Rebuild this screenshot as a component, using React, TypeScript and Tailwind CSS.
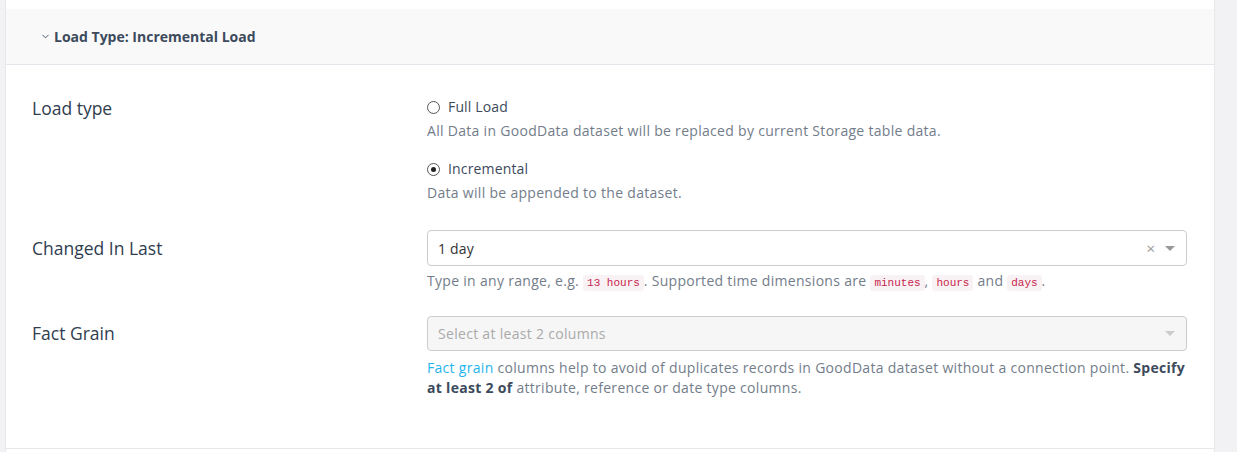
import { ChevronDown } from 'lucide-react'

const font = { fontFamily: '"Open Sans", "Noto Sans", sans-serif' }

function Code({ children }: { children: React.ReactNode }) {
  return (
    <code className="rounded-[3px] bg-[#f9f2f4] px-[4px] py-[2px] font-['Liberation_Mono',monospace] text-[11px] tracking-normal text-[#c7254e]">
      {children}
    </code>
  )
}

function Radio({ checked, label }: { checked?: boolean; label: string }) {
  return (
    <label className="flex items-center gap-[8px] text-[14px] leading-[20px] tracking-[0.15px] text-[#3c4a5c]">
      <span className="flex size-[13px] items-center justify-center rounded-full border border-[#555]">
        {checked && <span className="size-[5px] rounded-full bg-[#222]" />}
      </span>
      {label}
    </label>
  )
}

function Caret({ light }: { light?: boolean }) {
  return (
    <span
      className={`h-0 w-0 border-x-[5px] border-t-[5px] border-x-transparent ${
        light ? 'border-t-[#ccc]' : 'border-t-[#999]'
      }`}
    />
  )
}

export default function App() {
  return (
    <div className="flex h-[452px] w-[1237px] bg-[#f2f2f5]" style={font}>
      <div className="w-[6px] border-r border-[#e8e8ec]" />
      <div className="flex w-[1208px] flex-col bg-white">
        <div className="h-[9px]" />
        <div className="flex h-[56px] items-center gap-[3px] border-b border-[#e4e4ea] bg-[#f9f9f9] pl-[34px]">
          <ChevronDown className="size-[11px] text-[#3c4a5c]" strokeWidth={2} />
          <span className="text-[14px] font-bold text-[#3c4a5c]">Load Type: Incremental Load</span>
        </div>

        <div className="flex flex-col border-b border-[#e8e8ec] px-[26px] pb-[50px] pt-[32px]">
          <div className="mb-[27px] flex">
            <div className="w-[395px] text-[17.5px] leading-[22px] text-[#2f3d4f]">Load type</div>
            <div className="flex w-[760px] flex-col">
              <Radio label="Full Load" />
              <p className="mt-[4px] text-[14px] leading-[20px] tracking-[0.3px] text-[#737d8a]">
                All Data in GoodData dataset will be replaced by current Storage table data.
              </p>
              <div className="mt-[18px]">
                <Radio checked label="Incremental" />
              </div>
              <p className="mt-[4px] text-[14px] leading-[20px] tracking-[0.3px] text-[#737d8a]">
                Data will be appended to the dataset.
              </p>
            </div>
          </div>

          <div className="mb-[23px] flex">
            <div className="w-[395px] text-[17.5px] leading-[36px] text-[#2f3d4f]">Changed In Last</div>
            <div className="flex w-[760px] flex-col">
              <div className="flex h-[36px] items-center rounded-[4px] border border-[#ccc] pl-[10px] pr-[11px]">
                <span className="flex-1 text-[14px] tracking-[0.2px] text-[#333]">1 day</span>
                <span className="mr-[10px] text-[15px] leading-none text-[#999]">×</span>
                <Caret />
              </div>
              <p className="mt-[5px] text-[14px] leading-[20px] tracking-[0.3px] text-[#737d8a]">
                Type in any range, e.g. <Code>13 hours</Code>. Supported time dimensions are{' '}
                <Code>minutes</Code>, <Code>hours</Code> and <Code>days</Code>.
              </p>
            </div>
          </div>

          <div className="flex">
            <div className="w-[395px] text-[17.5px] leading-[35px] text-[#2f3d4f]">Fact Grain</div>
            <div className="flex w-[760px] flex-col">
              <div className="flex h-[35px] items-center rounded-[4px] border border-[#ccc] bg-[#f6f6f6] pl-[10px] pr-[11px]">
                <span className="flex-1 text-[14px] tracking-[0.3px] text-[#aaa]">Select at least 2 columns</span>
                <Caret light />
              </div>
              <p className="mt-[7px] text-[14px] leading-[20px] tracking-[0.3px] text-[#737d8a]">
                <span className="text-[#1fb5ee]">Fact grain</span> columns help to avoid of duplicates
                records in GoodData dataset without a connection point.{' '}
                <strong className="font-bold text-[#3c4a5c]">Specify at least 2 of</strong> attribute,
                reference or date type columns.
              </p>
            </div>
          </div>
        </div>
      </div>
      <div className="flex-1 border-l border-[#e8e8ec]" />
    </div>
  )
}
